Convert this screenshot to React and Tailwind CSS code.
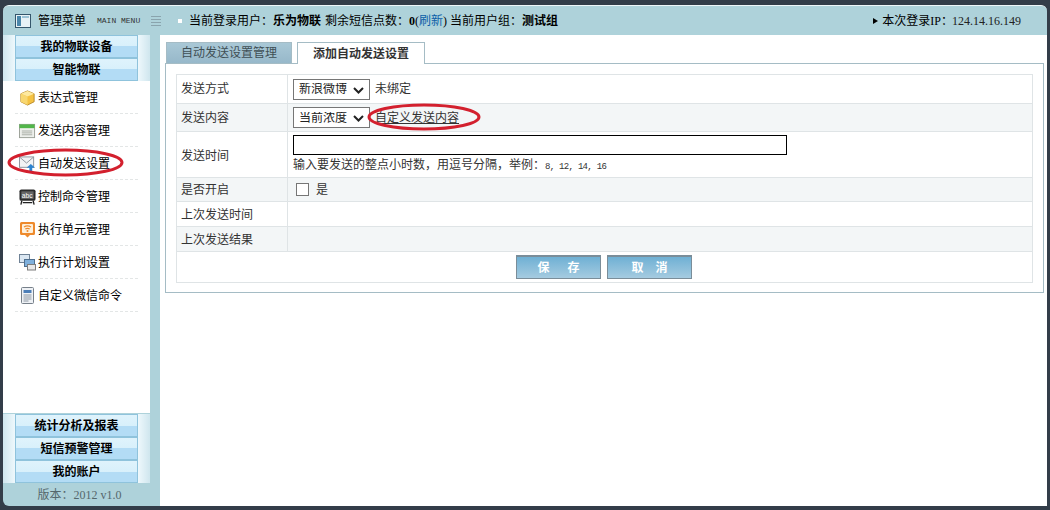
import { useState } from 'react';

const FONT = "font-['Liberation_Serif','Noto_Sans_CJK_SC',serif]";

const IconBox = () => (
  <svg width="18" height="18" viewBox="0 0 18 18">
    <path d="M9 1.5 16 4.5V13L9 16.5 2 13V4.5Z" fill="#f5c242" stroke="#b98a2a" strokeWidth="1" />
    <path d="M2 4.5 9 7.5 16 4.5 9 1.5Z" fill="#fde9a0" />
    <path d="M9 7.5V16.5L2 13V4.5Z" fill="#f8d770" />
  </svg>
);

const IconList = () => (
  <svg width="18" height="18" viewBox="0 0 18 18">
    <rect x="0.5" y="2" width="16" height="14" fill="#eef0ec" stroke="#9a9f96" />
    <rect x="0.5" y="2" width="16" height="4" fill="#52b64a" />
    <path d="M3 9h11M3 11h11M3 13h11" stroke="#a7aca4" />
  </svg>
);

const IconMail = () => (
  <svg width="18" height="18" viewBox="0 0 18 18">
    <rect x="0.5" y="1.5" width="15" height="11" fill="#f2f3f5" stroke="#8b939c" />
    <path d="M1 2 8 8 15 2" fill="none" stroke="#8b939c" />
    <path d="M11 17v-4H8l4.5-4 4.5 4h-3v4Z" fill="#2d83cf" />
  </svg>
);

const IconAbc = () => (
  <svg width="18" height="18" viewBox="0 0 18 18">
    <rect x="0.5" y="1" width="17" height="12" rx="2" fill="#2b2b2b" />
    <rect x="2.5" y="3" width="13" height="8" fill="#666" />
    <text x="3" y="10" fontSize="7" fill="#fff" fontFamily="Liberation Sans">abc</text>
    <path d="M3 13 2 17M15 13l1 4M4 15h10" stroke="#222" strokeWidth="1.4" />
  </svg>
);

const IconWifi = () => (
  <svg width="17" height="17" viewBox="0 0 17 17">
    <path d="M2.5 1h12A1.5 1.5 0 0 1 16 2.5v10a1.500 1.500 0 0 1-1.500 1.500H11l-2.500 2.500L6 14H2.500A1.500 1.500 0 0 1 1 12.500v-10A1.500 1.500 0 0 1 2.500 1Z" fill="#ee8a2c" />
    <rect x="3" y="3" width="11" height="9" rx="1" fill="#fdf0dc" />
    <path d="M5 6c2-1.300 5-1.300 7 0M6.300 8c1.300-.8 3.100-.8 4.400 0" fill="none" stroke="#ee8a2c" strokeWidth="1.200" />
    <circle cx="8.500" cy="10" r="1" fill="#ee8a2c" />
  </svg>
);

const IconWindows = () => (
  <svg width="17" height="17" viewBox="0 0 17 17">
    <rect x="0.500" y="0.500" width="10" height="8" fill="#dbe7f2" stroke="#6f8296" />
    <rect x="5.500" y="5.500" width="10" height="7" fill="#7fb0dc" stroke="#4f6f8f" />
    <rect x="8.500" y="10.500" width="8" height="5.500" fill="#e8e8e8" stroke="#7d7d7d" />
  </svg>
);

const IconDoc = () => (
  <svg width="15" height="17" viewBox="0 0 15 17">
    <rect x="1.500" y="0.500" width="12" height="16" rx="1" fill="#eef1f5" stroke="#77808a" />
    <rect x="3.500" y="3" width="8" height="3" fill="#4d7fb8" />
    <path d="M3.500 8h8M3.500 10h8M3.500 12h8M3.500 14h5" stroke="#8e98a3" />
  </svg>
);

const MENU = [
  { label: '表达式管理', icon: <IconBox /> },
  { label: '发送内容管理', icon: <IconList /> },
  { label: '自动发送设置', icon: <IconMail /> },
  { label: '控制命令管理', icon: <IconAbc /> },
  { label: '执行单元管理', icon: <IconWifi /> },
  { label: '执行计划设置', icon: <IconWindows /> },
  { label: '自定义微信命令', icon: <IconDoc /> },
];

const SideHead = ({ children }) => (
  <div className="flex h-[23px] shrink-0">
    <div className="w-[12px] bg-[linear-gradient(90deg,#cfe6ee,#eef8fc)]" />
    <div className="flex-1 flex items-center justify-center border border-[#8fc3dc] bg-[linear-gradient(#dff3fc_0%,#d8f0fb_50%,#b3dcf5_50%,#b3dcf5_100%)] font-bold text-black">
      {children}
    </div>
    <div className="w-[12px] bg-[linear-gradient(90deg,#eef8fc,#cfe6ee)]" />
  </div>
);

const Row = ({ label, alt, className = '', labelClass = '', children }) => (
  <div className={`flex border-b border-[#dfe4e6] ${alt ? 'bg-[#f3f6f7]' : 'bg-white'} ${className}`}>
    <div className={`w-[111px] shrink-0 flex items-center pl-[4px] border-r border-[#dfe4e6] text-[#333] ${labelClass}`}>{label}</div>
    <div className="flex-1 flex flex-col justify-center pl-[5px] text-[#333]">{children}</div>
  </div>
);

const Select = ({ value }) => (
  <div className="relative w-[77px] h-[21px]">
    <select className="appearance-none w-full h-full pl-[5px] border border-[#767676] bg-white text-[#222] rounded-none">
      <option>{value}</option>
    </select>
    <svg className="absolute right-[6px] top-[8px] pointer-events-none" width="11" height="7" viewBox="0 0 11 7">
      <path d="M1 1l4.500 4.500L10 1" fill="none" stroke="#222" strokeWidth="2" />
    </svg>
  </div>
);

const Btn = ({ children }) => (
  <button className="w-[85px] h-[24px] border border-[#7a8d99] border-t-2 bg-[linear-gradient(#6fb0d4,#a5cbe0)] text-white font-bold whitespace-pre">
    {children}
  </button>
);

export default function App() {
  const [enabled, setEnabled] = useState(false);

  return (
    <div className={`relative w-[1050px] h-[510px] overflow-hidden bg-[#333d49] pt-[5px] px-[3px] pb-[4px] text-[12px] leading-none ${FONT}`}>
      <div className="flex flex-col h-full rounded-t-[6px] rounded-bl-[6px] overflow-hidden bg-[#aed2da] border-t border-[#eef6f8]">
        {/* top bar */}
        <div className="flex items-center h-[29px] shrink-0 text-black">
          <svg className="ml-[12px]" width="16" height="14" viewBox="0 0 16 14">
            <rect x="0.500" y="0.500" width="15" height="13" fill="#e8f2f6" stroke="#35566b" />
            <rect x="2" y="2" width="4" height="10" fill="#4a87ab" />
            <rect x="7" y="2" width="7" height="2" fill="#9cc3d6" />
          </svg>
          <span className="ml-[7px] w-[59px]">管理菜单</span>
          <span className="w-[54px] font-['Liberation_Mono',monospace] text-[8px] text-[#333]">MAIN MENU</span>
          <svg width="10" height="12" viewBox="0 0 10 12">
            <path d="M0 1.500h10M0 4.500h10M0 7.500h10M0 10.500h10" stroke="#8aa4ad" />
          </svg>
          <span className="ml-[17px] mr-[7px] w-[4px] h-[4px] bg-white" />
          <span>当前登录用户：</span>
          <b>乐为物联</b>
          <span className="ml-[4px]">剩余短信点数：</span>
          <b>0</b>
          <span>(<span className="text-[#0b5ea8]">刷新</span>)</span>
          <span className="ml-[3px]">当前用户组：</span>
          <b>测试组</b>
          <span className="ml-auto mr-[4px] w-0 h-0 border-y-[3px] border-y-transparent border-l-[5px] border-l-black" />
          <span>本次登录IP：</span>
          <span className="ml-[-1px] mr-[26px] text-[#222]">124.14.16.149</span>
        </div>

        <div className="flex flex-1 min-h-0">
          {/* sidebar */}
          <div className="w-[147px] shrink-0 flex flex-col">
            <SideHead>我的物联设备</SideHead>
            <SideHead>智能物联</SideHead>
            <div className="flex-1 bg-white text-black">
              {MENU.map((item) => (
                <div key={item.label} className="mx-[12px] h-[33px] pt-[1px] flex items-center border-b border-dashed border-[#e3e6e6]">
                  <div className="w-[17px] ml-[4px] mr-[2px] flex justify-center">{item.icon}</div>
                  <span>{item.label}</span>
                </div>
              ))}
            </div>
            <div className="h-px shrink-0" />
            <SideHead>统计分析及报表</SideHead>
            <SideHead>短信预警管理</SideHead>
            <SideHead>我的账户</SideHead>
            <div className="h-[23px] shrink-0 pl-[6px] flex items-center justify-center text-[#55676c]">版本：2012 v1.0</div>
          </div>

          <div className="w-[10px] shrink-0" />

          {/* main */}
          <div className="flex-1 bg-white pl-[5px] pr-[3px] pt-[7px]">
            <div className="flex h-[21px] pl-px">
              <div className="w-[126px] flex items-center justify-center border border-b-0 border-[#a5bcc5] bg-[linear-gradient(#a9c8d6,#97b8ca)] text-[#3f4f55]">自动发送设置管理</div>
              <div className="relative z-10 ml-[5px] w-[128px] h-[22px] flex items-center justify-center border border-b-0 border-[#a5bcc5] bg-white font-bold text-[#333]">添加自动发送设置</div>
            </div>
            <div className="h-[230px] border border-[#a5bcc5] px-[10px] pt-[10px]">
              <div className="h-[209px] border border-[#dfe4e6] flex flex-col">
                <Row label="发送方式" className="h-[29px]">
                  <div className="flex items-center gap-[5px]">
                    <Select value="新浪微博" />
                    <span>未绑定</span>
                  </div>
                </Row>
                <Row label="发送内容" alt className="h-[28px]">
                  <div className="flex items-center gap-[5px]">
                    <Select value="当前浓度" />
                    <a className="underline text-[#333]">自定义发送内容</a>
                  </div>
                </Row>
                <Row label="发送时间" className="h-[46px]" labelClass="pt-[2px]">
                  <div className="pb-[3px]">
                    <input className="block w-[494px] h-[20px] border border-black bg-white" />
                    <p className="mt-[4px] text-[#333]">
                      输入要发送的整点小时数，用逗号分隔，举例：<span className="font-['Liberation_Mono',monospace] text-[9px] tracking-[-0.7px]">8, 12, 14, 16</span>
                    </p>
                  </div>
                </Row>
                <Row label="是否开启" alt className="h-[24px]">
                  <label className="flex items-center pl-[3px] gap-[7px]">
                    <input
                      type="checkbox"
                      checked={enabled}
                      onChange={(e) => setEnabled(e.target.checked)}
                      className="appearance-none w-[13px] h-[13px] border border-[#767676] bg-white"
                    />
                    是
                  </label>
                </Row>
                <Row label="上次发送时间" className="h-[25px]" labelClass="pt-[2px]" />
                <Row label="上次发送结果" alt className="h-[25px]" labelClass="pt-[2px]" />
                <div className="flex-1 flex justify-center gap-[6px] pt-[3px] pr-[1px]">
                  <Btn>{'保      存'}</Btn>
                  <Btn>{'取    消'}</Btn>
                </div>
              </div>
            </div>
          </div>
        </div>
      </div>

      {/* red hand-drawn marks on the screenshot */}
      <svg className="absolute left-[7px] top-[148px]" width="117" height="29" viewBox="0 0 117 29">
        <ellipse cx="58.500" cy="14.500" rx="56.500" ry="12.500" fill="none" stroke="#d3202e" strokeWidth="3" />
      </svg>
      <svg className="absolute left-[367px] top-[103px]" width="114" height="28" viewBox="0 0 114 28">
        <ellipse cx="57" cy="14" rx="55" ry="12" fill="none" stroke="#d3202e" strokeWidth="3" />
      </svg>
    </div>
  );
}
